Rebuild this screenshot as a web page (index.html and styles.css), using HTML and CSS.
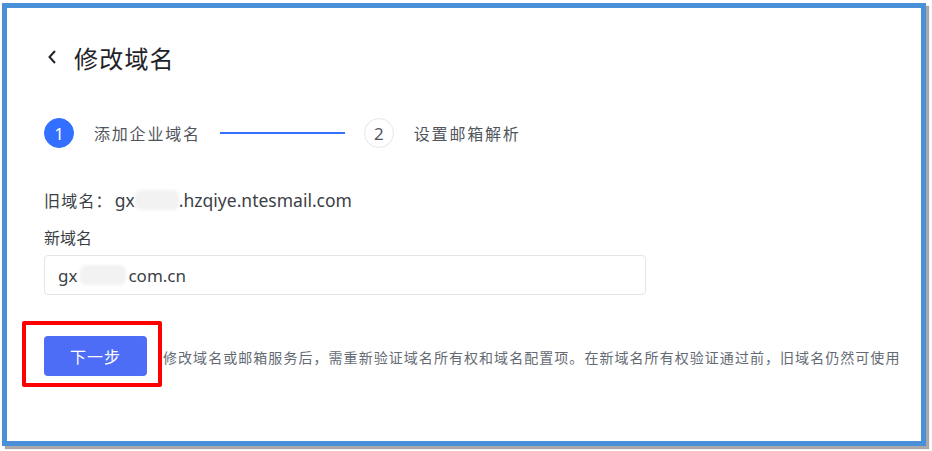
FILE: index.html
```html
<!DOCTYPE html>
<html lang="zh-CN">
<head>
<meta charset="utf-8">
<link rel="stylesheet" href="styles.css">
</head>
<body>
<div class="frame">
  <div class="header">
    <svg class="back" width="10" height="16" viewBox="0 0 10 16"><path d="M8 2 L2.5 8 L8 14" fill="none" stroke="#1f2329" stroke-width="2"/></svg>
    <h1 class="title">修改域名</h1>
  </div>
  <div class="steps">
    <div class="step active"><span class="num">1</span><span class="label">添加企业域名</span></div>
    <div class="line"></div>
    <div class="step"><span class="num">2</span><span class="label">设置邮箱解析</span></div>
  </div>
  <div class="old"><span class="cjk">旧域名：</span>gx<span class="blur b1"></span>.hzqiye.ntesmail.com</div>
  <div class="field-label">新域名</div>
  <div class="input">gx<span class="blur b2"></span>com.cn</div>
  <div class="actions">
    <div class="mark"></div>
    <button class="btn">下一步</button>
    <span class="note">修改域名或邮箱服务后，需重新验证域名所有权和域名配置项。在新域名所有权验证通过前，旧域名仍然可使用</span>
  </div>
</div>
</body>
</html>
```
FILE: styles.css
```css
* { box-sizing: border-box; }
html, body { margin: 0; padding: 0; background: #fff; }
body {
  font-family: "Noto Sans", "Noto Sans CJK SC", sans-serif;
  width: 932px;
  height: 451px;
  overflow: hidden;
}
.frame {
  margin: 3px 0 0 2px;
  width: 924px;
  height: 443px;
  border: 5px solid #4a90d9;
  box-shadow: 3px 3px 1px #a9a9a9;
  padding: 0 0 0 37px;
  background: #fff;
}
.header {
  display: flex;
  align-items: center;
  height: 36px;
  margin-top: 31px;
}
.back { margin-left: 3px; }
.title {
  margin: 0 0 0 17px;
  font-size: 24px;
  font-weight: 400;
  color: #1f2329;
  letter-spacing: 1.2px;
  font-family: "Noto Sans CJK SC", sans-serif;
}
.steps {
  display: flex;
  align-items: center;
  margin-top: 43px;
  height: 30px;
}
.step { display: flex; align-items: center; }
.num {
  width: 30px;
  height: 30px;
  border-radius: 50%;
  border: 1px solid #e4e6eb;
  display: flex;
  align-items: center;
  justify-content: center;
  font-size: 17px;
  color: #51565d;
  font-family: "Noto Sans", sans-serif;
}
.step.active .num { background: #3370ff; border-color: #3370ff; color: #fff; }
.label {
  margin-left: 20px;
  font-size: 16px;
  color: #51565d;
  letter-spacing: 1.8px;
  font-family: "Noto Sans CJK SC", sans-serif;
}
.line {
  width: 125px;
  height: 2px;
  background: #3370ff;
  margin: 0 19px 0 19px;
}
.old {
  margin-top: 40px;
  font-size: 17.5px;
  color: #3b3f45;
  line-height: 24px;
  display: flex;
  align-items: center;
}
.cjk {
  font-family: "Noto Sans CJK SC", sans-serif;
  font-size: 16px;
  letter-spacing: 1.2px;
  margin-right: 2px;
}
.blur {
  display: inline-block;
  background: #f2f2f3;
  border-radius: 6px;
  height: 20px;
  filter: blur(1.5px);
}
.b1 { width: 44px; }
.b2 { width: 46px; margin: 0 2px 0 3px; }
.field-label {
  margin-top: 13px;
  font-size: 16px;
  color: #3b3f45;
  line-height: 24px;
  font-family: "Noto Sans CJK SC", sans-serif;
}
.input {
  margin-top: 6px;
  width: 602px;
  height: 40px;
  flex: none;
  border: 1px solid #e3e5ea;
  border-radius: 4px;
  padding-left: 13px;
  display: flex;
  align-items: center;
  font-size: 17px;
  color: #3b3f45;
}
.actions {
  position: relative;
  display: flex;
  align-items: center;
  margin-top: 41px;
}
.mark {
  position: absolute;
  left: -22px;
  top: -15px;
  width: 140px;
  height: 66px;
  border: 4px solid #ff0000;
  border-radius: 2px;
}
.btn {
  width: 103px;
  height: 40px;
  flex: none;
  border: 0;
  border-radius: 4px;
  background: #4d6df6;
  color: #fff;
  font-size: 16px;
  letter-spacing: 1px;
  font-family: "Noto Sans CJK SC", sans-serif;
  padding: 0;
}
.note {
  margin-left: 16px;
  font-size: 14px;
  color: #646a73;
  letter-spacing: 1.05px;
  margin-top: 2px;
  white-space: nowrap;
  font-family: "Noto Sans CJK SC", sans-serif;
}
```
